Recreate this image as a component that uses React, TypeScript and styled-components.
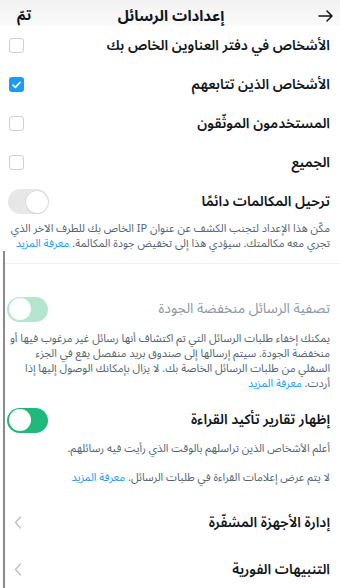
import React from "react";
import styled, { createGlobalStyle } from "styled-components";

const Global = createGlobalStyle`
  html, body { margin: 0; padding: 0; background: #ffffff; }
  body {
    font-family: "Noto Sans Arabic", "Noto Sans", "DejaVu Sans", sans-serif;
    color: #0f1419;
  }
  * { box-sizing: border-box; }
`;

const Page = styled.div`
  width: 340px;
  height: 588px;
  overflow: hidden;
  direction: rtl;
  background: #fff;
  display: flex;
  flex-direction: column;
`;

const Header = styled.header`
  height: 26px;
  padding: 6px 5px 0 8px;
  display: flex;
  align-items: center;
  justify-content: space-between;
  background: linear-gradient(#f2f2f2, #fafafa);
`;

const HeaderTitle = styled.div`
  font-size: 15px;
  font-weight: 700;
  line-height: 20px;
  flex: 1;
  text-align: center;
  padding-right: 11px;
`;

const Done = styled.div`
  font-size: 14px;
  font-weight: 700;
  line-height: 20px;
  width: 30px;
  text-align: left;
  padding-left: 9px;
`;

const IconSlot = styled.div`
  width: 20px;
  height: 20px;
  display: flex;
  align-items: center;
  justify-content: center;
`;

const Upper = styled.div`
  padding: 0 10px 0 8px;
  display: flex;
  flex-direction: column;
`;

const Row = styled.div<{ $h: number }>`
  height: ${(p) => p.$h}px;
  display: flex;
  align-items: center;
  justify-content: space-between;
`;

const Label = styled.div<{ $muted?: boolean }>`
  font-size: 14px;
  font-weight: ${(p) => (p.$muted ? 400 : 600)};
  color: ${(p) => (p.$muted ? "#8b98a5" : "#0f1419")};
  line-height: 20px;
`;

const Box = styled.div<{ $checked?: boolean }>`
  width: 15px;
  height: 15px;
  margin-left: 1px;
  border-radius: 3px;
  border: ${(p) => (p.$checked ? "none" : "1.5px solid #c9d2d8")};
  background: ${(p) => (p.$checked ? "#1d9bf0" : "#fff")};
  display: flex;
  align-items: center;
  justify-content: center;
`;

const Track = styled.div<{ $on: boolean; $dim?: boolean }>`
  width: 41px;
  height: 25px;
  border-radius: 13px;
  padding: 1.5px;
  display: flex;
  justify-content: ${(p) => (p.$on ? "flex-end" : "flex-start")};
  background: ${(p) => (!p.$on ? "#e7e7e7" : p.$dim ? "#b4e6cf" : "#1fb97b")};
`;

const Knob = styled.div<{ $on: boolean }>`
  width: 22px;
  height: 22px;
  border-radius: 50%;
  background: #fff;
  box-shadow: ${(p) =>
    !p.$on ? "0 0 0 0.5px #cfcfcf, 0 1px 1px rgba(0,0,0,0.08)" : "none"};
`;

const Desc = styled.p<{ $lh: number; $mt?: number }>`
  margin: ${(p) => p.$mt ?? 0}px 0 0;
  font-size: 11px;
  line-height: ${(p) => p.$lh}px;
  color: #536471;
  white-space: nowrap;
`;

const Link = styled.span`
  color: #1d9bf0;
`;

const Lower = styled.div`
  margin-left: 3px;
  border-left: 2px solid #8a8a8a;
  flex: 1;
  display: flex;
  flex-direction: column;
  padding-top: 12px;
`;

const Divider = styled.div`
  height: 1px;
  background: #eef1f3;
`;

const LowerBody = styled.div`
  padding: 0 10px 0 2px;
  display: flex;
  flex-direction: column;
`;

const Spacer = styled.div<{ $h: number }>`
  height: ${(p) => p.$h}px;
  flex: none;
`;

const NavRow = styled.div`
  height: 47px;
  display: flex;
  align-items: center;
  justify-content: space-between;
  padding-left: 7px;
`;

const Check = () => (
  <svg width="9" height="8" viewBox="0 0 9 8">
    <path d="M1 4.2 L3.4 6.4 L8 1.4" fill="none" stroke="#fff" strokeWidth="1.6" strokeLinecap="round" strokeLinejoin="round" />
  </svg>
);

const Arrow = () => (
  <svg width="15" height="12" viewBox="0 0 15 12">
    <path d="M1 6 H14 M9 1 L14 6 L9 11" fill="none" stroke="#0f1419" strokeWidth="1.5" strokeLinecap="round" strokeLinejoin="round" />
  </svg>
);

const Chevron = () => (
  <svg width="8" height="13" viewBox="0 0 8 13">
    <path d="M6.5 1 L1.5 6.5 L6.5 12" fill="none" stroke="#b5bcc2" strokeWidth="1.2" strokeLinecap="round" strokeLinejoin="round" />
  </svg>
);

const Toggle = ({ on, dim }: { on: boolean; dim?: boolean }) => (
  <Track $on={on} $dim={dim}>
    <Knob $on={on} />
  </Track>
);

const checks = [
  { label: "الأشخاص في دفتر العناوين الخاص بك", checked: false },
  { label: "الأشخاص الذين تتابعهم", checked: true },
  { label: "المستخدمون الموثّقون", checked: false },
  { label: "الجميع", checked: false },
];

export default function App() {
  return (
    <>
      <Global />
      <Page>
        <Header>
          <IconSlot>
            <Arrow />
          </IconSlot>
          <HeaderTitle>إعدادات الرسائل</HeaderTitle>
          <Done>تمّ</Done>
        </Header>
        <Upper>
          {checks.map((c) => (
            <Row $h={39} key={c.label}>
              <Label>{c.label}</Label>
              <Box $checked={c.checked}>{c.checked && <Check />}</Box>
            </Row>
          ))}
          <Row $h={39}>
            <Label>ترحيل المكالمات دائمًا</Label>
            <Toggle on={false} />
          </Row>
          <Desc $lh={15}>
            مكّن هذا الإعداد لتجنب الكشف عن عنوان IP الخاص بك للطرف الآخر الذي
            <br />
            تجري معه مكالمتك. سيؤدي هذا إلى تخفيض جودة المكالمة. <Link>معرفة المزيد</Link>
          </Desc>
        </Upper>
        <Lower>
          <Divider />
          <LowerBody>
            <Spacer $h={29} />
            <Row $h={32}>
              <Label $muted>تصفية الرسائل منخفضة الجودة</Label>
              <Toggle on dim />
            </Row>
            <Desc $lh={15} $mt={6}>
              يمكنك إخفاء طلبات الرسائل التي تم اكتشاف أنها رسائل غير مرغوب فيها أو
              <br />
              منخفضة الجودة. سيتم إرسالها إلى صندوق بريد منفصل يقع في الجزء
              <br />
              السفلي من طلبات الرسائل الخاصة بك. لا يزال بإمكانك الوصول إليها إذا
              <br />
              أردت. <Link>معرفة المزيد</Link>
            </Desc>
            <Spacer $h={13} />
            <Row $h={32}>
              <Label>إظهار تقارير تأكيد القراءة</Label>
              <Toggle on />
            </Row>
            <Desc $lh={15} $mt={5}>
              أعلم الأشخاص الذين تراسلهم بالوقت الذي رأيت فيه رسائلهم.
            </Desc>
            <Desc $lh={15} $mt={14}>
              لا يتم عرض إعلامات القراءة في طلبات الرسائل. <Link>معرفة المزيد</Link>
            </Desc>
            <Spacer $h={14} />
            <NavRow>
              <Label>إدارة الأجهزة المشفّرة</Label>
              <Chevron />
            </NavRow>
            <NavRow>
              <Label>التنبيهات الفورية</Label>
              <Chevron />
            </NavRow>
          </LowerBody>
        </Lower>
      </Page>
    </>
  );
}
